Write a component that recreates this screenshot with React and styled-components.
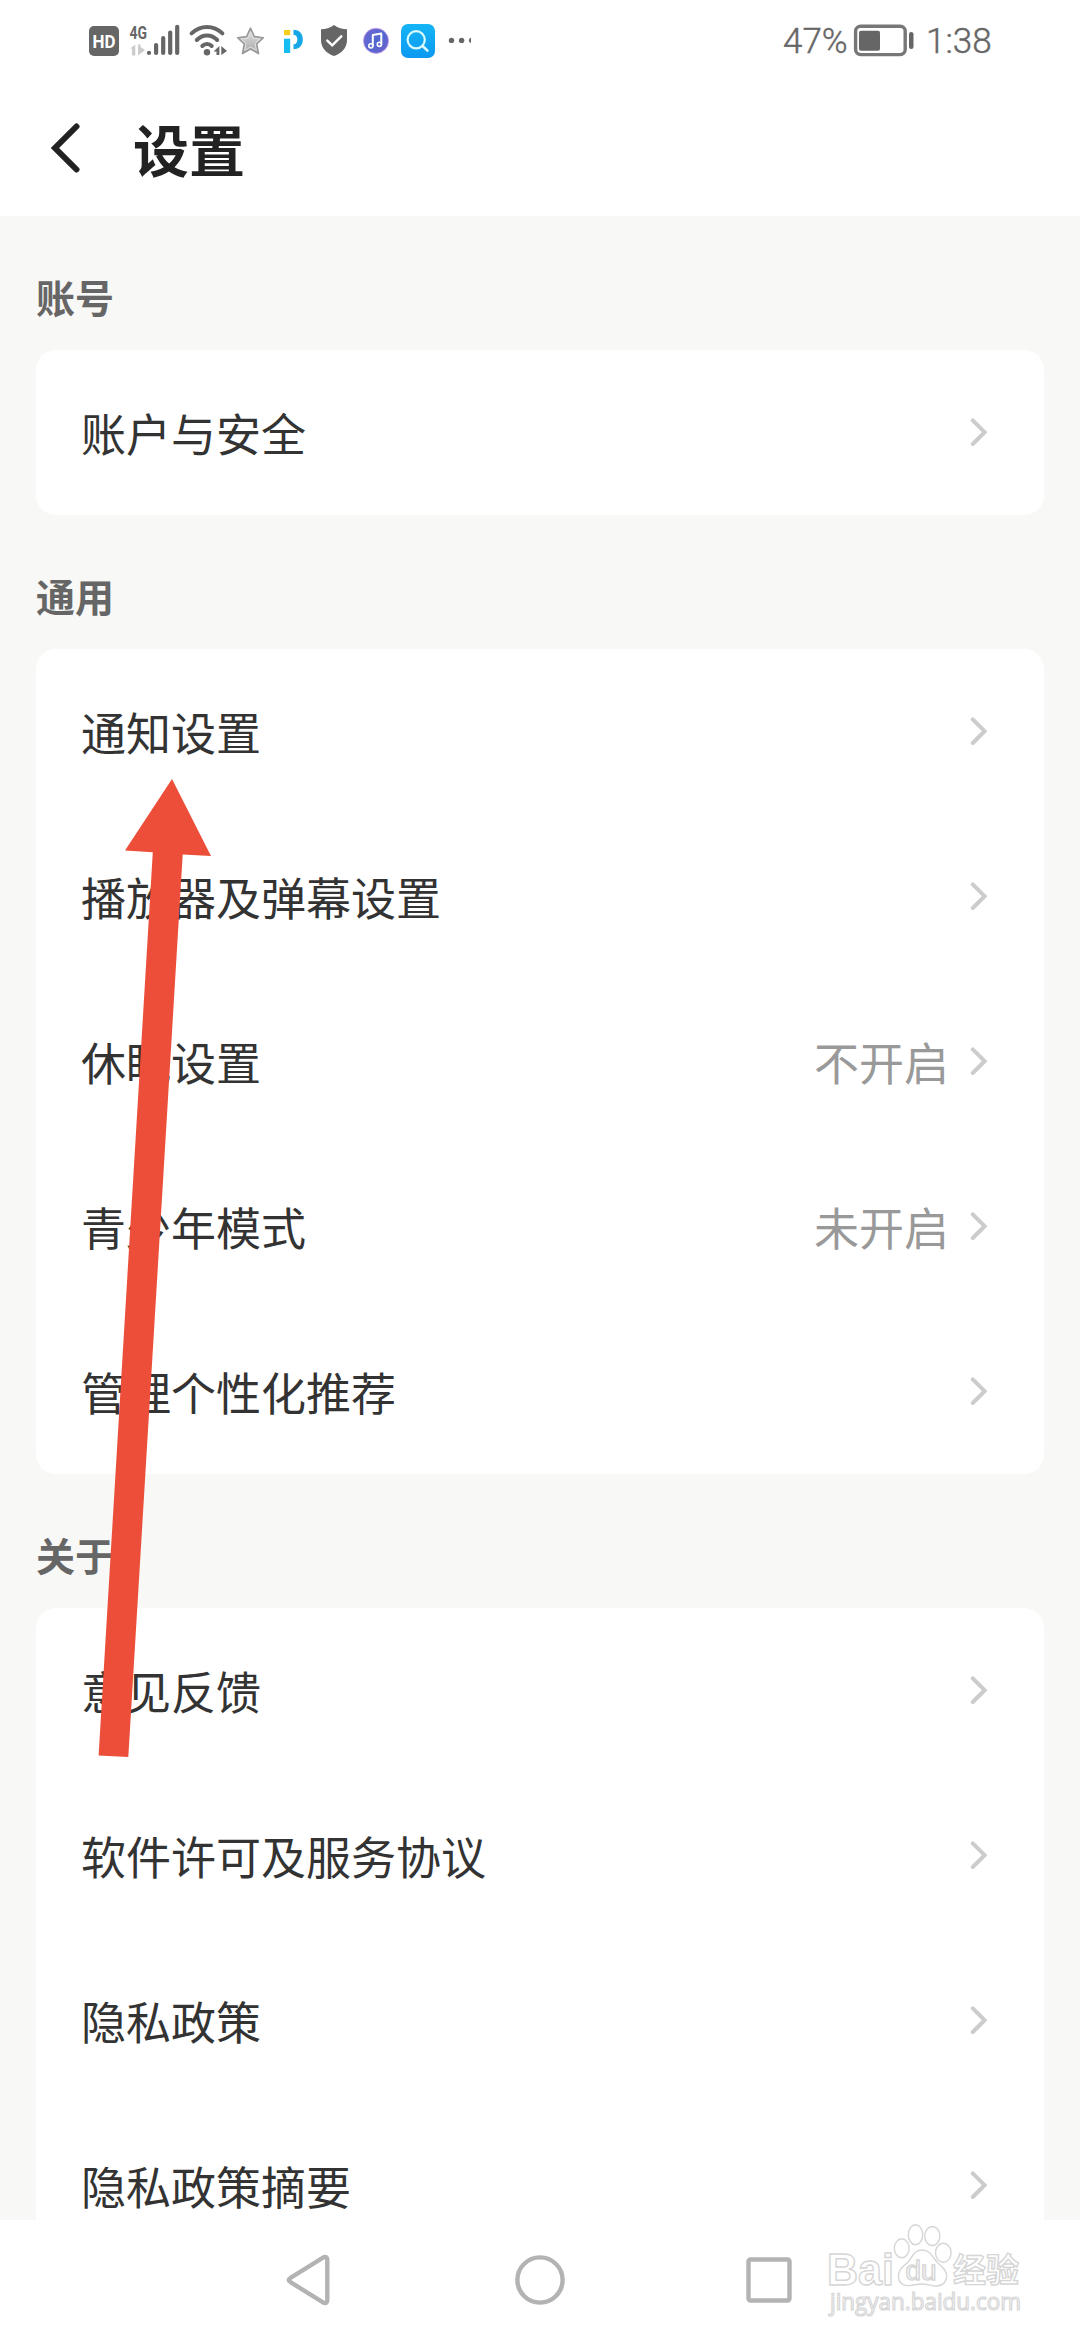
import React from 'react'
import styled, { createGlobalStyle } from 'styled-components'


const sections = [
    {
        title: '账号',
        rows: [{ label: '账户与安全' }],
    },
    {
        title: '通用',
        rows: [
            { label: '通知设置' },
            { label: '播放器及弹幕设置' },
            { label: '休眠设置', value: '不开启' },
            { label: '青少年模式', value: '未开启' },
            { label: '管理个性化推荐' },
        ],
    },
    {
        title: '关于',
        rows: [
            { label: '意见反馈' },
            { label: '软件许可及服务协议' },
            { label: '隐私政策' },
            { label: '隐私政策摘要' },
        ],
    },
]

export default function App() {
    return (
        <Screen>
            <GlobalStyle />
            <StatusBar />

            <Header>
                <BackIcon viewBox="0 0 30 50">
                    <path d="M26.5 3.5 L5 25 L26.5 46.5" />
                </BackIcon>
                <Title>设置</Title>
            </Header>

            <Content>
                {sections.map(section => (
                    <section key={section.title}>
                        <SectionTitle>{section.title}</SectionTitle>
                        <Card>
                            {section.rows.map(row => (
                                <Row key={row.label}>
                                    <Label>{row.label}</Label>
                                    {row.value && <Value>{row.value}</Value>}
                                    <Chevron viewBox="0 0 18 30">
                                        <path d="M3.8 2.4 L15.6 14.2 L3.8 26" />
                                    </Chevron>
                                </Row>
                            ))}
                        </Card>
                    </section>
                ))}
            </Content>

            <NavBar>
                <NavIcon viewBox="0 0 54 54">
                    <path d="M6.5 24.8 L39 4.6 Q43.3 2.6 43.3 7 V47 Q43.3 51.4 39 49.4 L6.5 29.2 Q2.9 27 6.5 24.8Z" />
                </NavIcon>
                <NavIcon viewBox="0 0 54 54">
                    <circle cx="27" cy="27" r="22.6" />
                </NavIcon>
                <NavIcon viewBox="0 0 54 54">
                    <rect x="6.5" y="6.5" width="41" height="41" rx="2" />
                </NavIcon>
            </NavBar>

            <Watermark />
            <Arrow viewBox="0 0 120 984">
                <path d="M79 4 L118 81 L89.7 79.4 L35.3 982 L5.6 980.4 L59.8 77.3 L32 75.6 Z" />
            </Arrow>
        </Screen>
    )
}

function StatusBar() {
    return (
        <Status>
            <StatusIcon viewBox="89 20 30 40" $w={30}>
                <rect x="89" y="26" width="30" height="30" rx="5" fill="#666" />
                <text x="104" y="48" textAnchor="middle" textLength="23" lengthAdjust="spacingAndGlyphs" fontSize="19" fontWeight="700" fill="#fff">HD</text>
            </StatusIcon>

            <StatusIcon viewBox="129 20 51 40" $w={51} $left={10}>
                <text x="129.5" y="38.5" textLength="17.5" lengthAdjust="spacingAndGlyphs" fontSize="19" fontWeight="700" fill="#666">4G</text>
                <path d="M130 48.5 L135.3 44.5 V55.5 H132 V48.5Z M138 44.5 H140.5 V47 L145 50 L138 55.5Z" fill="#ccc" />
                <path d="M149 52.8v.1 M156.1 45v8 M163.2 38v15 M170.2 32.5v20.5 M177.2 26.8v26.2" stroke="#666" strokeWidth="4.2" strokeLinecap="round" />
            </StatusIcon>

            <StatusIcon viewBox="188 20 40 40" $w={40} $left={8}>
                <g fill="none" stroke="#666" strokeWidth="4" strokeLinecap="round">
                    <path d="M191.6 33.4 C200.5 24.8 213.5 24.8 222.4 33.4" />
                    <path d="M196.8 40 C202.5 34 211.5 34 217.2 40" />
                    <path d="M202.3 46 C205 43.2 209 43.2 211.7 46" />
                </g>
                <circle cx="207" cy="52.2" r="3.2" fill="#666" />
                <path d="M213.5 51.5 L219.4 46 V55 H216.5 V51.5Z M221.3 46 L227 51 L221.3 55Z" fill="#666" />
            </StatusIcon>

            <StatusIcon viewBox="236 20 29 40" $w={29} $left={8}>
                <defs>
                    <linearGradient id="star" x1="0" y1="0" x2="0" y2="1">
                        <stop offset="0" stopColor="#e6e6e6" />
                        <stop offset="1" stopColor="#a6a6a6" />
                    </linearGradient>
                </defs>
                <path d="M250.5 28.2 L254.3 36.6 L263.4 37.7 L256.7 44 L258.5 53.6 L250.5 49 L242.5 53.6 L244.3 44 L237.6 37.7 L246.7 36.6Z" fill="url(#star)" stroke="#999" strokeWidth="1.6" strokeLinejoin="round" />
                <path d="M250.5 31.8 L253.2 38.2 L260 39 L255 43.6 L256.4 50.4 L250.5 47 L244.6 50.4 L246 43.6 L241 39 L247.8 38.2Z" fill="none" stroke="#e2e2e2" strokeWidth="1" />
            </StatusIcon>

            <StatusIcon viewBox="283 20 21 40" $w={21} $left={18}>
                <rect x="284" y="30" width="6.2" height="5.2" fill="#f6cf1d" />
                <rect x="284" y="38.7" width="6.2" height="14.3" fill="#16bdf0" />
                <path d="M293.5 29.8 C299.5 29.8 302.8 34 302.8 39.4 C302.8 45 299.5 49.2 293.5 49.2 V44.3 C296.4 44.3 297.3 42 297.3 39.5 C297.3 37 296.4 34.9 293.5 34.9Z" fill="#17a6e6" />
            </StatusIcon>

            <StatusIcon viewBox="320 20 28 40" $w={28} $left={16}>
                <path d="M334 25 C338 28 342.5 29 347 29.3 V40 C347 48 341.5 53.5 334 56 C326.5 53.5 321 48 321 40 V29.3 C325.5 29 330 28 334 25Z" fill="#666" />
                <path d="M327.3 40.6 L332.2 45.4 L341.3 36.3" fill="none" stroke="#fff" strokeWidth="2.4" strokeLinecap="round" />
            </StatusIcon>

            <StatusIcon viewBox="362 20 28 40" $w={28} $left={14}>
                <defs>
                    <linearGradient id="music" x1="0" y1="0" x2="1" y2="1">
                        <stop offset="0" stopColor="#7468d2" />
                        <stop offset="0.5" stopColor="#5267cf" />
                        <stop offset="1" stopColor="#6d62cc" />
                    </linearGradient>
                </defs>
                <circle cx="376" cy="40.8" r="12.6" fill="url(#music)" stroke="#cfa5ea" strokeWidth="0.8" />
                <path d="M372.8 46 V35 L381.3 33.6 V44.3" fill="none" stroke="#fff" strokeWidth="2" strokeLinejoin="round" />
                <circle cx="370.9" cy="45.8" r="2.1" fill="none" stroke="#fff" strokeWidth="1.6" />
                <circle cx="379.4" cy="44.3" r="2.1" fill="none" stroke="#fff" strokeWidth="1.6" />
            </StatusIcon>

            <StatusIcon viewBox="400 20 36 40" $w={36} $left={10}>
                <defs>
                    <linearGradient id="search" x1="0" y1="0" x2="0" y2="1">
                        <stop offset="0" stopColor="#14b4f5" />
                        <stop offset="1" stopColor="#0c99f0" />
                    </linearGradient>
                </defs>
                <rect x="401" y="24" width="34" height="34" rx="7" fill="url(#search)" />
                <circle cx="416.2" cy="39.8" r="8.6" fill="none" stroke="#d9fbff" strokeWidth="2.2" />
                <path d="M422.6 46 L427.4 50.6" stroke="#d9fbff" strokeWidth="2.6" strokeLinecap="round" />
            </StatusIcon>

            <StatusIcon viewBox="448 20 23 40" $w={23} $left={12}>
                <circle cx="451.5" cy="40.4" r="2.7" fill="#666" />
                <circle cx="461.6" cy="40.4" r="2.7" fill="#666" />
                <circle cx="471.6" cy="40.4" r="2.7" fill="#666" />
            </StatusIcon>

            <Percent>47%</Percent>
            <StatusIcon viewBox="852 20 64 40" $w={64} $left={4}>
                <rect x="855.6" y="26.2" width="49.6" height="28.4" rx="5" fill="none" stroke="#777" strokeWidth="3.4" />
                <rect x="859" y="30.8" width="21" height="20" rx="2" fill="#666" />
                <rect x="909" y="32" width="4.5" height="17" rx="2.2" fill="#666" />
            </StatusIcon>
            <Clock>1:38</Clock>
        </Status>
    )
}

function Watermark() {
    return (
        <WatermarkSvg viewBox="820 2215 210 110">
            <g fill="#fff" stroke="#d6d6d6" strokeWidth="1.4">
                <ellipse cx="901.7" cy="2248.3" rx="7.4" ry="9.5" />
                <ellipse cx="915.5" cy="2234.7" rx="7.2" ry="10" />
                <ellipse cx="932.3" cy="2236" rx="7.6" ry="9.5" />
                <ellipse cx="943.3" cy="2252.7" rx="7.8" ry="9.5" />
                <text x="827" y="2284.5" textLength="67" lengthAdjust="spacingAndGlyphs" fontSize="44" fontWeight="700" fontFamily="Liberation Sans, sans-serif">Bai</text>
                <path d="M922 2250 C914 2250 912.5 2257 908 2262 C903 2267 898.5 2269 898.5 2276.5 C898.5 2283 903 2286 909 2285.6 C914 2285.3 917 2284 922 2284 C928 2284 932 2286.4 937 2286 C943.5 2285.5 946.6 2281 946.6 2276 C946.6 2269 941 2266.5 937 2262 C932.5 2257 930 2250 922 2250Z" />
                <text x="905.5" y="2280" textLength="31" lengthAdjust="spacingAndGlyphs" fontSize="27" fontFamily="Liberation Sans, sans-serif">du</text>
                <text x="953" y="2281.5" textLength="66" fontSize="33" fontWeight="700" fontFamily="Noto Sans CJK SC, sans-serif">经验</text>
                <text x="830" y="2310" textLength="191" lengthAdjust="spacingAndGlyphs" fontSize="23" strokeWidth="1.2" fontFamily="Open Sans, sans-serif">jingyan.baidu.com</text>
            </g>
        </WatermarkSvg>
    )
}

const GlobalStyle = createGlobalStyle`
    body {
        margin: 0;
        background: #fff;
    }
`

const Screen = styled.div`
    position: relative;
    display: flex;
    flex-direction: column;
    width: 1080px;
    height: 2340px;
    overflow: hidden;
    background: #fff;
    font-family: 'Noto Sans CJK SC', sans-serif;
`

const Status = styled.div`
    display: flex;
    align-items: center;
    box-sizing: border-box;
    flex: none;
    height: 80px;
    padding-left: 89px;
    color: #666;
    font-family: Roboto, sans-serif;
    font-size: 35px;
    line-height: 40px;
`

const StatusIcon = styled.svg`
    display: block;
    flex: none;
    width: ${p => p.$w}px;
    height: 40px;
    margin-left: ${p => p.$left || 0}px;
`

const Percent = styled.span`
    width: 65px;
    margin-left: 312px;
    padding-top: 4px;
    font-weight: 300;
    -webkit-text-stroke: 0.4px #666;
`

const Clock = styled.span`
    margin-left: 10px;
    padding-top: 4px;
    font-weight: 300;
    -webkit-text-stroke: 0.4px #666;
`

const Header = styled.header`
    display: flex;
    align-items: center;
    flex: none;
    height: 136px;
    padding-left: 50px;
`

const BackIcon = styled.svg`
    width: 30px;
    height: 50px;
    fill: none;
    stroke: #222;
    stroke-width: 6;
    stroke-linecap: round;
`

const Title = styled.h1`
    margin: 0 0 0 53px;
    color: #222;
    font-size: 56px;
    font-weight: 700;
    line-height: 80px;
`

const Content = styled.main`
    flex: 1;
    min-height: 0;
    padding: 0 36px;
    overflow: hidden;
    background: #f8f8f6;
`

const SectionTitle = styled.h2`
    box-sizing: border-box;
    height: 134px;
    margin: 0;
    padding-top: 52px;
    color: #666;
    font-size: 39px;
    font-weight: 700;
    line-height: 56px;
`

const Card = styled.div`
    border-radius: 20px;
    background: #fff;
`

const Row = styled.div`
    display: flex;
    align-items: center;
    height: 165px;
    padding: 0 57px 0 45px;
`

const Label = styled.span`
    flex: 1;
    color: #333;
    font-size: 45px;
    line-height: 66px;
`

const Value = styled.span`
    margin-right: 20px;
    color: #999;
    font-size: 45px;
    line-height: 66px;
`

const Chevron = styled.svg`
    width: 18px;
    height: 30px;
    fill: none;
    stroke: #ccc;
    stroke-width: 4;
    stroke-linecap: round;
`

const NavBar = styled.nav`
    display: flex;
    align-items: center;
    justify-content: center;
    gap: 175px;
    flex: none;
    height: 120px;
    background: #fff;
`

const NavIcon = styled.svg`
    width: 54px;
    height: 54px;
    fill: none;
    stroke: #b3b3b3;
    stroke-width: 4.4;
`

const WatermarkSvg = styled.svg`
    position: absolute;
    left: 820px;
    top: 2215px;
    width: 210px;
    height: 110px;
`

/* hand-drawn pointer lying over the list */
const Arrow = styled.svg`
    position: absolute;
    left: 93px;
    top: 775px;
    width: 120px;
    height: 984px;
    fill: #ed4e39;
`
